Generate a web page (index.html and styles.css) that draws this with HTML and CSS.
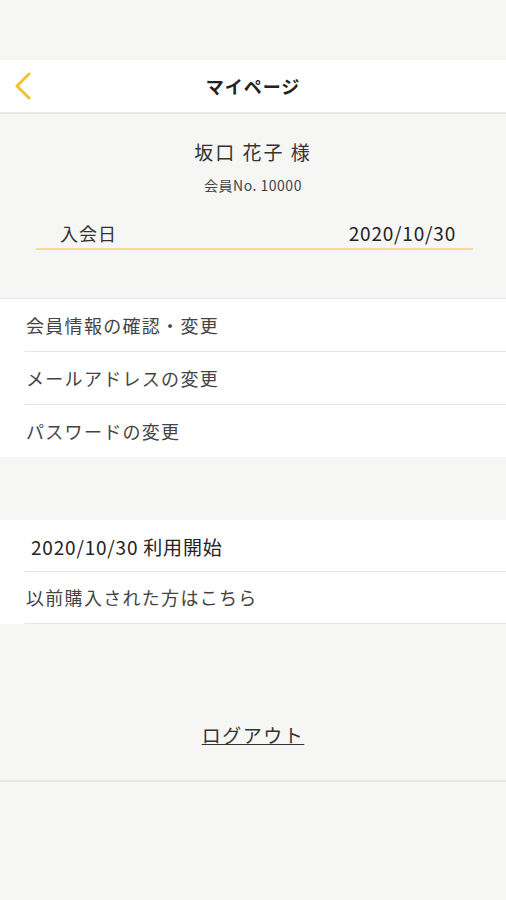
FILE: index.html
```html
<!DOCTYPE html>
<html lang="ja">
<head>
    <meta charset="UTF-8">
    <meta name="viewport" content="width=device-width, initial-scale=1.0">
    <title>マイページ</title>
    <link rel="stylesheet" href="styles.css">
</head>
<body>
    <div class="status-bar"></div>

    <header class="header">
        <a class="back" href="#">
            <svg width="18" height="28" viewBox="0 0 18 28">
                <polyline points="15,2 3,14 15,26" fill="none" stroke="#f2c233" stroke-width="3" stroke-linecap="round" stroke-linejoin="round"/>
            </svg>
        </a>
        <h1 class="title">マイページ</h1>
    </header>

    <section class="profile">
        <p class="name">坂口 花子 様</p>
        <p class="member-no">会員No. 10000</p>
        <div class="join-row">
            <span>入会日</span>
            <span class="join-date">2020/10/30</span>
        </div>
    </section>

    <ul class="menu">
        <li class="menu-item">会員情報の確認・変更</li>
        <li class="menu-item">メールアドレスの変更</li>
        <li class="menu-item">パスワードの変更</li>
    </ul>

    <ul class="menu menu-second">
        <li class="menu-item start">2020/10/30 利用開始</li>
        <li class="menu-item">以前購入された方はこちら</li>
    </ul>

    <div class="logout">
        <a href="#">ログアウト</a>
    </div>
</body>
</html>
```

FILE: styles.css
```css
body {
    margin: 0;
    background: #f6f6f4;
    font-family: "Noto Sans CJK JP", "Noto Sans", sans-serif;
    color: #333;
}
p, ul, h1 {
    margin: 0;
    padding: 0;
}
.status-bar {
    height: 60px;
}
.header {
    position: relative;
    height: 52px;
    background: #fff;
    border-bottom: 2px solid #e8e8e5;
    display: flex;
    align-items: center;
    justify-content: center;
}
.back {
    position: absolute;
    left: 14px;
    top: 12px;
    display: block;
}
.title {
    font-size: 18px;
    font-weight: bold;
    color: #222;
    letter-spacing: 1px;
}
.profile {
    padding-top: 23px;
    height: 161px;
    text-align: center;
}
.name {
    font-size: 19px;
    line-height: 30px;
    color: #333;
    letter-spacing: 2px;
}
.member-no {
    margin-top: 9px;
    font-size: 14px;
    line-height: 18px;
    color: #444;
    letter-spacing: 0.5px;
}
.join-row {
    margin: 24px 33px 0 36px;
    padding: 0 18px 0 24px;
    display: flex;
    justify-content: space-between;
    font-size: 18px;
    line-height: 30px;
    border-bottom: 2px solid #f5dc8e;
    color: #333;
    letter-spacing: 1px;
}
.join-date {
    color: #222;
    font-size: 19px;
    letter-spacing: 0.8px;
    margin-right: -1px;
}
.menu {
    list-style: none;
    background: #fff;
    padding-left: 25px;
    border-top: 1px solid #e6e6e4;
}
.menu-item {
    height: 52px;
    line-height: 52px;
    font-size: 18px;
    letter-spacing: 1.3px;
    color: #444;
    padding-left: 1px;
    border-bottom: 1px solid #e6e6e4;
}
.menu .menu-item:last-child {
    border-bottom: none;
}
.menu-second {
    margin-top: 63px;
    border-top: none;
}
.menu-second .menu-item {
    height: 51px;
    line-height: 54px;
}
.menu-second .menu-item:last-child {
    line-height: 50px;
    border-bottom: 1px solid #e6e6e4;
}
.start {
    padding-left: 6px;
    color: #222;
    font-size: 19px;
    letter-spacing: 0.8px;
}
.logout {
    margin-top: 96px;
    height: 60px;
    text-align: center;
    border-bottom: 2px solid #e6e6e4;
}
.logout a {
    font-size: 19px;
    line-height: 30px;
    color: #333;
    text-decoration: underline;
    letter-spacing: 1.5px;
}
```
